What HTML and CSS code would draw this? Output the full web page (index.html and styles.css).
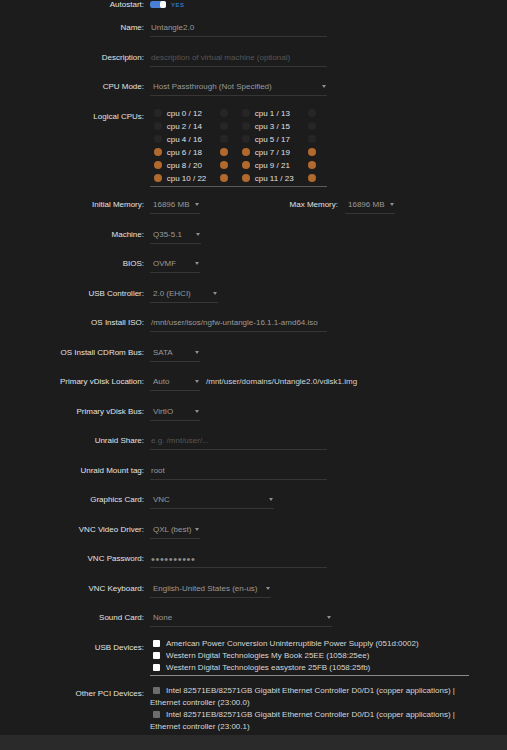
FILE: index.html
```html
<!DOCTYPE html>
<html lang="en">

<head>
    <meta charset="UTF-8" />
    <meta name="viewport" content="width=device-width, initial-scale=1.0" />
    <title>VM Settings</title>
    <link rel="stylesheet" href="styles.css">
</head>

<body>
    <div class="panel">
        <div class="row row-auto">
            <span class="label">Autostart:</span>
            <span class="toggle"><span class="knob"></span></span>
            <span class="yes">YES</span>
        </div>

        <div class="row">
            <span class="label">Name:</span>
            <div class="field w177">Untangle2.0</div>
        </div>

        <div class="row">
            <span class="label">Description:</span>
            <div class="field w177 placeholder">description of virtual machine (optional)</div>
        </div>

        <div class="row">
            <span class="label">CPU Mode:</span>
            <div class="field select w177">Host Passthrough (Not Specified)</div>
        </div>

        <div class="row row-multi">
            <span class="label">Logical CPUs:</span>
            <div class="cpu-grid">
                <div class="pair"><span class="dot"></span><span class="cpu">cpu 0 / 12</span><span class="dot"></span></div>
                <div class="pair"><span class="dot"></span><span class="cpu">cpu 1 / 13</span><span class="dot"></span></div>
                <div class="pair"><span class="dot"></span><span class="cpu">cpu 2 / 14</span><span class="dot"></span></div>
                <div class="pair"><span class="dot"></span><span class="cpu">cpu 3 / 15</span><span class="dot"></span></div>
                <div class="pair"><span class="dot"></span><span class="cpu">cpu 4 / 16</span><span class="dot"></span></div>
                <div class="pair"><span class="dot"></span><span class="cpu">cpu 5 / 17</span><span class="dot"></span></div>
                <div class="pair"><span class="dot on"></span><span class="cpu">cpu 6 / 18</span><span class="dot on"></span></div>
                <div class="pair"><span class="dot on"></span><span class="cpu">cpu 7 / 19</span><span class="dot on"></span></div>
                <div class="pair"><span class="dot on"></span><span class="cpu">cpu 8 / 20</span><span class="dot on"></span></div>
                <div class="pair"><span class="dot on"></span><span class="cpu">cpu 9 / 21</span><span class="dot on"></span></div>
                <div class="pair"><span class="dot on"></span><span class="cpu">cpu 10 / 22</span><span class="dot on"></span></div>
                <div class="pair"><span class="dot on"></span><span class="cpu">cpu 11 / 23</span><span class="dot on"></span></div>
            </div>
        </div>

        <div class="row">
            <span class="label">Initial Memory:</span>
            <div class="field select w50">16896 MB</div>
            <span class="label label-max">Max Memory:</span>
            <div class="field select w50">16896 MB</div>
        </div>

        <div class="row">
            <span class="label">Machine:</span>
            <div class="field select w51">Q35-5.1</div>
        </div>

        <div class="row">
            <span class="label">BIOS:</span>
            <div class="field select w50">OVMF</div>
        </div>

        <div class="row">
            <span class="label">USB Controller:</span>
            <div class="field select w68">2.0 (EHCI)</div>
        </div>

        <div class="row">
            <span class="label">OS Install ISO:</span>
            <div class="field w177">/mnt/user/isos/ngfw-untangle-16.1.1-amd64.iso</div>
        </div>

        <div class="row">
            <span class="label">OS Install CDRom Bus:</span>
            <div class="field select w50">SATA</div>
        </div>

        <div class="row">
            <span class="label">Primary vDisk Location:</span>
            <div class="field select w50">Auto</div>
            <span class="path">/mnt/user/domains/Untangle2.0/vdisk1.img</span>
        </div>

        <div class="row">
            <span class="label">Primary vDisk Bus:</span>
            <div class="field select w50">VirtIO</div>
        </div>

        <div class="row">
            <span class="label">Unraid Share:</span>
            <div class="field w177 placeholder">e.g. /mnt/user/...</div>
        </div>

        <div class="row">
            <span class="label">Unraid Mount tag:</span>
            <div class="field w177">root</div>
        </div>

        <div class="row">
            <span class="label">Graphics Card:</span>
            <div class="field select w124">VNC</div>
        </div>

        <div class="row">
            <span class="label">VNC Video Driver:</span>
            <div class="field select w50">QXL (best)</div>
        </div>

        <div class="row">
            <span class="label">VNC Password:</span>
            <div class="field w177 dots">••••••••••</div>
        </div>

        <div class="row">
            <span class="label">VNC Keyboard:</span>
            <div class="field select w121">English-United States (en-us)</div>
        </div>

        <div class="row">
            <span class="label">Sound Card:</span>
            <div class="field select w182">None</div>
        </div>

        <div class="row row-multi row-usb">
            <span class="label">USB Devices:</span>
            <div class="dev-list usb-list">
                <div class="dev"><span class="box"></span>American Power Conversion Uninterruptible Power Supply (051d:0002)</div>
                <div class="dev"><span class="box"></span>Western Digital Technologies My Book 25EE (1058:25ee)</div>
                <div class="dev"><span class="box"></span>Western Digital Technologies easystore 25FB (1058:25fb)</div>
            </div>
        </div>

        <div class="row row-multi row-last">
            <span class="label">Other PCI Devices:</span>
            <div class="dev-list">
                <div class="dev"><span class="box box-off"></span>Intel 82571EB/82571GB Gigabit Ethernet Controller D0/D1 (copper applications) | Ethernet controller (23:00.0)</div>
                <div class="dev"><span class="box box-off"></span>Intel 82571EB/82571GB Gigabit Ethernet Controller D0/D1 (copper applications) | Ethernet controller (23:00.1)</div>
            </div>
        </div>
    </div>
</body>

</html>
```

FILE: styles.css
```css
body {
    margin: 0;
    background-color: #2a2a2a;
    font-family: 'Liberation Sans', Arial, sans-serif;
    font-size: 8px;
    color: #d6d6d6;
}

.panel {
    background-color: #1c1c1c;
    padding-bottom: 2.5px;
}

.row {
    display: flex;
    align-items: flex-start;
    margin-bottom: 12.5px;
}

.label {
    flex: none;
    width: 144px;
    margin-right: 6px;
    text-align: right;
    line-height: 16px;
    color: #e2e2e2;
}

/* autostart */
.row-auto {
    height: 10px;
    align-items: center;
    margin-bottom: 10px;
}

.row-auto .label {
    line-height: 10px;
}

.toggle {
    display: flex;
    justify-content: flex-end;
    width: 16px;
    height: 7px;
    border-radius: 2.5px;
    background-color: #4a7fd6;
    margin-top: -0.5px;
}

.knob {
    width: 6px;
    height: 7px;
    border-radius: 2px;
    background-color: #ffffff;
}

.yes {
    margin-left: 5px;
    font-size: 6px;
    font-weight: bold;
    letter-spacing: 0.5px;
    color: #2f78c4;
}

/* inputs and selects */
.field {
    box-sizing: border-box;
    height: 17px;
    line-height: 16px;
    padding-left: 1px;
    border-bottom: 1px solid #363636;
    color: #9a9a9a;
    white-space: nowrap;
    overflow: hidden;
}

.placeholder {
    color: #565656;
}

.dots {
    font-size: 11px;
    letter-spacing: 0.6px;
    color: #8a8a8a;
}

.select {
    display: flex;
    justify-content: space-between;
    align-items: center;
    padding-left: 3px;
    padding-right: 1px;
}

.select::after {
    content: '';
    flex: none;
    border-left: 2px solid transparent;
    border-right: 2px solid transparent;
    border-top: 3.5px solid #909090;
    margin-top: -1px;
}

.w50 { width: 50px; }
.w51 { width: 51px; }
.w68 { width: 68px; }
.w121 { width: 121px; }
.w124 { width: 124px; }
.w177 { width: 177px; }
.w182 { width: 182px; }

.label-max {
    width: 138px;
    margin-right: 7px;
}

.path {
    margin-left: 6px;
    line-height: 16px;
    color: #d4d4d4;
}

/* logical cpus */
.row-multi {
    margin-bottom: 10.5px;
}

.cpu-grid {
    display: grid;
    grid-template-columns: 74px 74px;
    column-gap: 14px;
    width: 177px;
    box-sizing: border-box;
    margin-top: -2px;
    padding-left: 4px;
    padding-bottom: 1px;
    border-bottom: 1px solid #5a5a5a;
}

.pair {
    display: flex;
    align-items: center;
    height: 13px;
}

.dot {
    flex: none;
    width: 8px;
    height: 8px;
    border-radius: 50%;
    background-color: #262626;
}

.dot.on {
    background-color: #b2692d;
}

.cpu {
    width: 58px;
    box-sizing: border-box;
    padding-left: 4.7px;
    color: #e0e0e0;
}

/* device lists */
.dev-list {
    width: 319px;
    margin-top: -1.5px;
}

.usb-list {
    padding-bottom: 1px;
    border-bottom: 1px solid #8a8a8a;
}

.row-usb {
    margin-bottom: 10px;
}

.dev {
    line-height: 12px;
    color: #d6d6d6;
}

.box {
    display: inline-block;
    width: 7px;
    height: 7px;
    margin: 0 6px 0 3px;
    vertical-align: -1px;
    background-color: #ffffff;
    border-radius: 1px;
}

.box-off {
    background-color: #6c6c6c;
}

.row-last {
    margin-bottom: 0;
}
```
